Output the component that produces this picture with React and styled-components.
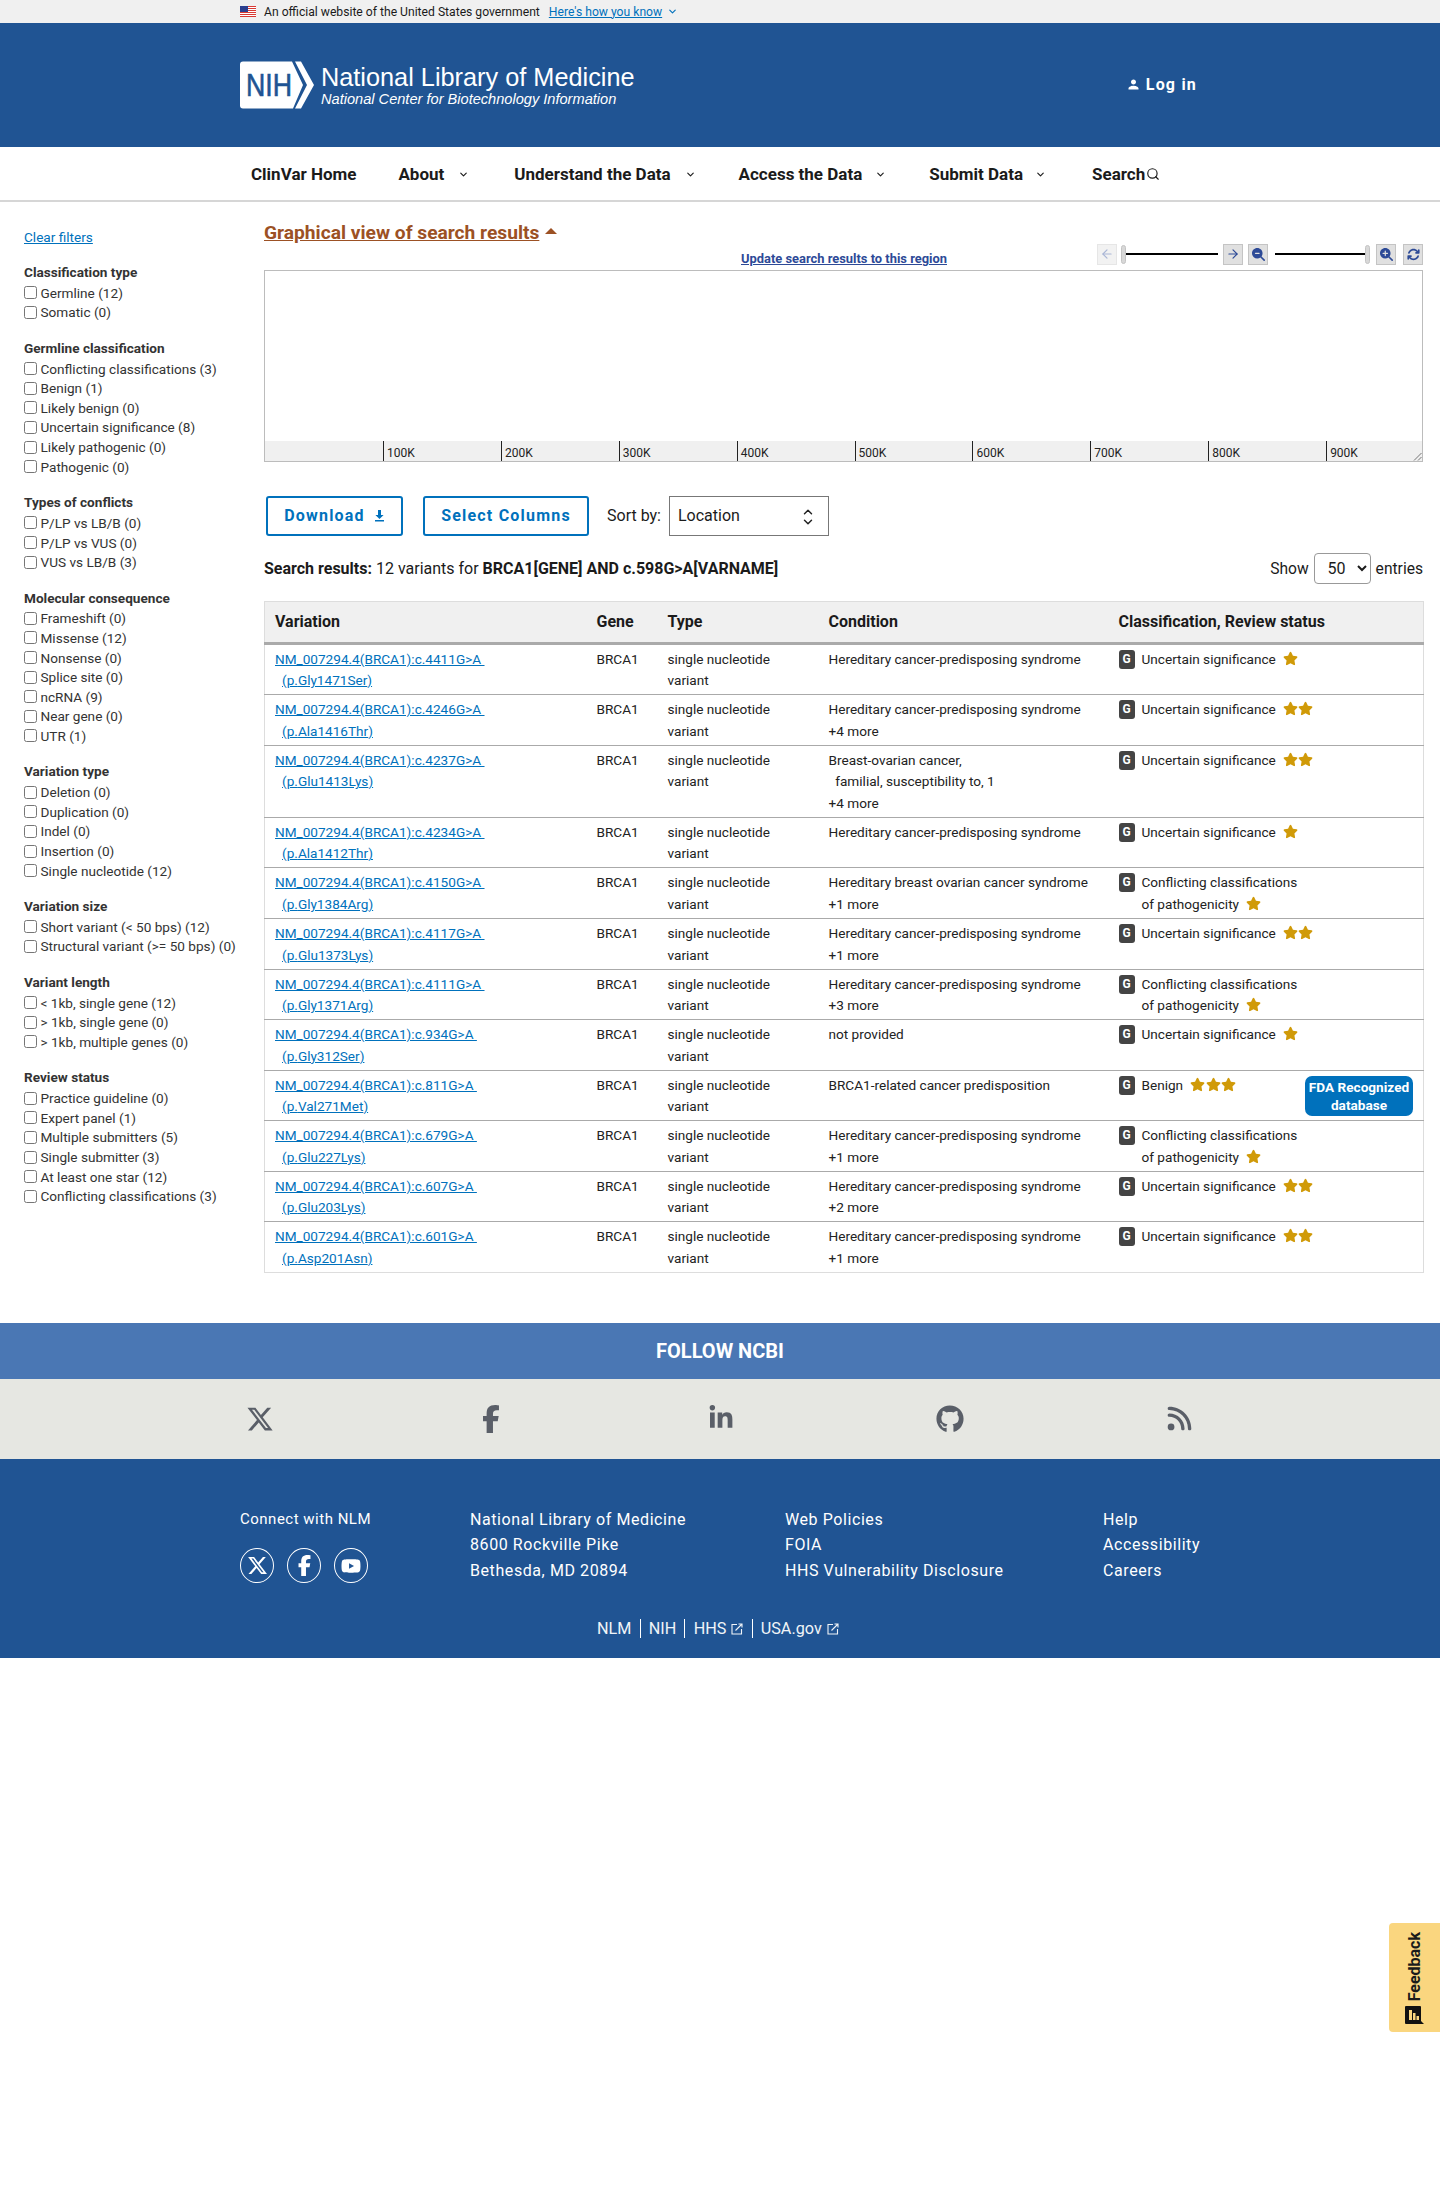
import React from "react";
import styled, { createGlobalStyle } from "styled-components";
import { ChevronDown, ChevronUp, ArrowLeft, ArrowRight, Search } from "lucide-react";
import { FaXTwitter, FaFacebookF, FaLinkedinIn, FaGithub, FaRss, FaYoutube, FaStar, FaMagnifyingGlassPlus, FaMagnifyingGlassMinus, FaArrowsRotate } from "react-icons/fa6";
import { MdPerson } from "react-icons/md";

const GlobalStyle = createGlobalStyle`
  html, body { margin: 0; padding: 0; background: #fff; }
  body { font-family: Roboto, "Liberation Sans", sans-serif; color: #1b1b1b; min-height: 2200px; }
  * { box-sizing: border-box; }
`;

const GovBanner = styled.div`
  height: 23px;
  background: #f0f0f0;
  display: flex;
  align-items: center;
  padding-left: 240px;
  font-size: 12.15px;
  color: #1b1b1b;
  svg.flag { margin-right: 8px; }
  a { color: #0071bc; margin-left: 9px; text-decoration: underline; }
  svg.chev { margin-left: 5px; color: #0071bc; }
`;

const Header = styled.header`
  height: 124px;
  background: #205493;
  display: flex;
  align-items: flex-start;
  padding: 38px 243px 0 240px;
  color: #fff;
`;

const LogoText = styled.div`
  margin-left: 7px;
  font-family: "Liberation Sans", Arial, sans-serif;
`;
const LogoTitle = styled.div`
  font-size: 25.3px;
  line-height: 30px;
  margin-top: 1px;
`;
const LogoSub = styled.div`
  font-size: 14.6px;
  font-style: italic;
  line-height: 15px;
`;

const LogIn = styled.a`
  margin-left: auto;
  margin-top: 14px;
  display: flex;
  align-items: center;
  gap: 5px;
  font-weight: 700;
  font-size: 16px;
  letter-spacing: 1.2px;
`;

const Nav = styled.nav`
  height: 55px;
  border-top: 1px solid #fff;
  border-bottom: 2px solid #d6d6d6;
  display: flex;
  align-items: center;
  padding-left: 251px;
`;

const NavItem = styled.a`
  display: flex;
  align-items: center;
  margin-right: ${(props) => props.$after || 0}px;
  font-weight: 700;
  font-size: 17px;
  color: #1b1b1b;
  svg { margin-left: ${(props) => props.$gap || 0}px; }
`;

const Page = styled.div`
  display: flex;
  align-items: flex-start;
`;

const Sidebar = styled.aside`
  width: 264px;
  flex-shrink: 0;
  padding: 27px 0 0 24px;
  font-size: 13.6px;
  color: #333;
`;

const ClearLink = styled.a`
  display: block;
  color: #0071bc;
  text-decoration: underline;
  line-height: 16px;
  margin-bottom: 17px;
`;

const FilterGroup = styled.div`
  margin-top: 15.7px;
`;

const FilterTitle = styled.div`
  font-weight: 700;
  line-height: 20px;
  margin-bottom: 1px;
`;

const FilterRow = styled.label`
  display: flex;
  align-items: center;
  height: 19.6px;
  input { width: 13px; height: 13px; margin: 0 3.5px 0 0; }
`;

const Main = styled.main`
  width: 1159px;
  padding-top: 19px;
`;

const ChartHeading = styled.a`
  display: inline-flex;
  align-items: center;
  gap: 6px;
  font-size: 19.2px;
  font-weight: 700;
  line-height: 24px;
  color: #9c5124;
  text-decoration: underline;
  i {
    display: block;
    width: 0;
    height: 0;
    border-left: 6px solid transparent;
    border-right: 6px solid transparent;
    border-bottom: 6px solid #9c5124;
    margin-bottom: 4px;
  }
`;

const ToolRow = styled.div`
  display: flex;
  align-items: flex-end;
  height: 26.5px;
  margin-top: -2px;
  padding-bottom: 5px;
`;

const UpdateLink = styled.a`
  margin-left: 477px;
  font-size: 12.9px;
  font-weight: 700;
  color: #2d4a97;
  text-decoration: underline;
  line-height: 14px;
  margin-bottom: -1px;
`;

const Tools = styled.div`
  margin-left: auto;
  display: flex;
  align-items: center;
  height: 21px;
`;

const ToolButton = styled.span`
  width: 20px;
  height: 21px;
  display: flex;
  align-items: center;
  justify-content: center;
  background: ${(props) => (props.$off ? "#f2f2f2" : "#e0e0e0")};
  border: 1px solid ${(props) => (props.$off ? "#e6e6e6" : "#c4c4c4")};
  color: ${(props) => (props.$off ? "#a9b6d6" : "#2d4a97")};
  margin-left: ${(props) => props.$ml || 0}px;
`;

const SliderTrack = styled.span`
  display: flex;
  align-items: center;
  width: ${(props) => props.$w}px;
  margin-left: ${(props) => props.$ml}px;
  height: 21px;
  flex-direction: ${(props) => (props.$end ? "row-reverse" : "row")};
  i {
    display: block;
    flex-shrink: 0;
    width: 5px;
    height: 19px;
    background: #d8d8d8;
    border: 1px solid #c4c4c4;
    border-radius: 3px;
  }
  b {
    display: block;
    flex: 1;
    height: 2px;
    background: #000;
  }
`;

const Chart = styled.div`
  position: relative;
  height: 192px;
  border: 1px solid #bcbcbc;
  display: flex;
  flex-direction: column;
  justify-content: flex-end;
`;

const Axis = styled.div`
  height: 20px;
  background: #f0f0f0;
  display: flex;
  padding-left: 118px;
`;

const Tick = styled.div`
  width: 117.9px;
  flex-shrink: 0;
  border-left: 1px solid #222;
  padding: 5px 0 0 3px;
  font-size: 12px;
  line-height: 15px;
  color: #222;
`;

const Grip = styled.svg`
  position: absolute;
  right: 0;
  bottom: 0;
`;

const Controls = styled.div`
  display: flex;
  align-items: center;
  margin: 34px 0 0 2px;
  height: 40px;
`;

const OutlineButton = styled.button`
  height: 40px;
  width: ${(props) => props.$w}px;
  margin-right: ${(props) => props.$mr}px;
  display: flex;
  align-items: center;
  justify-content: center;
  gap: 9px;
  background: #fff;
  border: 2px solid #0071bc;
  border-radius: 3px;
  color: #0071bc;
  font-family: Roboto, sans-serif;
  font-size: 16px;
  font-weight: 700;
  letter-spacing: 1.2px;
  padding: 0;
`;

const SortLabel = styled.span`
  font-size: 16px;
  margin-right: 8px;
`;

const SelectWrap = styled.div`
  position: relative;
  width: 160px;
  height: 40px;
  svg { position: absolute; right: 14px; color: #222; }
`;

const SortSelect = styled.select`
  appearance: none;
  width: 100%;
  height: 100%;
  border: 1px solid #777;
  border-radius: 0;
  background: #fff;
  padding-left: 8px;
  font-family: Roboto, sans-serif;
  font-size: 16px;
  color: #1b1b1b;
`;

const ResultsBar = styled.div`
  display: flex;
  align-items: center;
  justify-content: space-between;
  height: 32px;
  margin-top: 17px;
  font-size: 16px;
  color: #1b1b1b;
`;

const ShowBox = styled.div`
  display: flex;
  align-items: center;
  gap: 5px;
  font-size: 15.6px;
  select {
    width: 57px;
    height: 31px;
    border: 1px solid #999;
    border-radius: 4px;
    background: #fff;
    padding-left: 9px;
    font-family: Roboto, sans-serif;
    font-size: 16px;
    color: #1b1b1b;
  }
`;

const Table = styled.table`
  width: 1159px;
  margin-top: 16px;
  table-layout: fixed;
  border-collapse: collapse;
  font-size: 13.6px;
  color: #222;
  border: 1px solid #ddd;
  th {
    height: 42px;
    padding: 0 10px;
    background: #f0f0f0;
    border-bottom: 3px solid #aaa;
    text-align: left;
    font-size: 16px;
    font-weight: 700;
    color: #1b1b1b;
  }
  td {
    padding: 4px 10px 2.4px;
    line-height: 21.6px;
    vertical-align: top;
    border-bottom: 1px solid #aaa;
  }
  tr:last-child td { border-bottom: 1px solid #ddd; }
`;

const VarLink = styled.a`
  display: block;
  color: #0071bc;
  text-decoration: underline;
  white-space: pre;
  span { display: block; margin-left: 7px; }
`;

const TypeText = styled.span`
  display: block;
  max-width: 120px;
`;

const ConditionText = styled.div`
  white-space: pre;
`;

const StatusCell = styled.div`
  display: flex;
  align-items: flex-start;
`;

const GBadge = styled.span`
  flex-shrink: 0;
  width: 16px;
  height: 19px;
  margin: 1px 7px 0 0;
  background: #444;
  border-radius: 3px;
  color: #fff;
  font-size: 12px;
  font-weight: 700;
  line-height: 19px;
  text-align: center;
`;

const Stars = styled.span`
  display: inline-flex;
  gap: 0.4px;
  margin-left: 7px;
  vertical-align: -2px;
  color: #d09a08;
`;

const FdaBadge = styled.span`
  margin: 1px 0 0 auto;
  width: 108px;
  height: 40px;
  background: #0071bc;
  border-radius: 7px;
  color: #fff;
  font-size: 13.6px;
  font-weight: 700;
  line-height: 18px;
  text-align: center;
  padding-top: 2px;
`;

const FollowBar = styled.div`
  margin-top: 49.5px;
  height: 56px;
  background: #4a77b4;
  color: #fff;
  font-size: 20px;
  font-weight: 700;
  display: flex;
  align-items: center;
  justify-content: center;
`;

const SocialBar = styled.div`
  height: 80px;
  background: #e6e7e2;
  color: #5a5f68;
  display: flex;
  padding: 26px 0 0 246px;
  svg { display: block; }
`;

const SocialCell = styled.span`
  width: ${(props) => props.$w}px;
`;

const Footer = styled.footer`
  height: 199px;
  background: #205493;
  color: #fff;
  font-size: 16px;
  letter-spacing: 0.58px;
  padding: 48px 0 0 240px;
`;

const FooterCols = styled.div`
  display: flex;
  height: 112px;
`;

const FooterCol = styled.div`
  width: ${(props) => props.$w}px;
  line-height: 25.5px;
`;

const ConnectTitle = styled.div`
  font-size: 15px;
  letter-spacing: 0.5px;
`;

const Circles = styled.div`
  display: flex;
  gap: 13px;
  margin-top: 16px;
`;

const Circle = styled.span`
  width: 34px;
  height: 35px;
  border: 1px solid #fff;
  border-radius: 50%;
  display: flex;
  align-items: center;
  justify-content: center;
`;

const FooterLinks = styled.div`
  display: flex;
  align-items: center;
  margin-left: 357px;
  font-size: 16.2px;
  letter-spacing: 0;
  height: 20px;
  color: #f0f4f8;
  svg { margin-left: 5px; }
`;

const Sep = styled.span`
  width: 1px;
  height: 19px;
  background: #fff;
  margin: 0 8.2px;
`;

const Feedback = styled.a`
  position: fixed;
  top: 1923px;
  right: 0;
  width: 51px;
  height: 109px;
  background: #fad67f;
  border-radius: 4px 0 0 4px;
  display: flex;
  flex-direction: column;
  align-items: center;
  justify-content: flex-end;
  padding-bottom: 8px;
  color: #1b1b1b;
  span {
    writing-mode: vertical-rl;
    transform: rotate(180deg);
    font-size: 16px;
    font-weight: 700;
    line-height: 20px;
    margin-bottom: 5px;
  }
`;

const filters = [
  ["Classification type", ["Germline (12)", "Somatic (0)"]],
  ["Germline classification", ["Conflicting classifications (3)", "Benign (1)", "Likely benign (0)", "Uncertain significance (8)", "Likely pathogenic (0)", "Pathogenic (0)"]],
  ["Types of conflicts", ["P/LP vs LB/B (0)", "P/LP vs VUS (0)", "VUS vs LB/B (3)"]],
  ["Molecular consequence", ["Frameshift (0)", "Missense (12)", "Nonsense (0)", "Splice site (0)", "ncRNA (9)", "Near gene (0)", "UTR (1)"]],
  ["Variation type", ["Deletion (0)", "Duplication (0)", "Indel (0)", "Insertion (0)", "Single nucleotide (12)"]],
  ["Variation size", ["Short variant (< 50 bps) (12)", "Structural variant (>= 50 bps) (0)"]],
  ["Variant length", ["< 1kb, single gene (12)", "> 1kb, single gene (0)", "> 1kb, multiple genes (0)"]],
  ["Review status", ["Practice guideline (0)", "Expert panel (1)", "Multiple submitters (5)", "Single submitter (3)", "At least one star (12)", "Conflicting classifications (3)"]],
];

const HCPS = "Hereditary cancer-predisposing syndrome";
const US = "Uncertain significance";
const CONF = "Conflicting classifications";

const rows = [
  ["4411", "Gly1471Ser", [HCPS], US, 1],
  ["4246", "Ala1416Thr", [HCPS, "+4 more"], US, 2],
  ["4237", "Glu1413Lys", ["Breast-ovarian cancer,", "  familial, susceptibility to, 1", "+4 more"], US, 2],
  ["4234", "Ala1412Thr", [HCPS], US, 1],
  ["4150", "Gly1384Arg", ["Hereditary breast ovarian cancer syndrome", "+1 more"], CONF, 1],
  ["4117", "Glu1373Lys", [HCPS, "+1 more"], US, 2],
  ["4111", "Gly1371Arg", [HCPS, "+3 more"], CONF, 1],
  ["934", "Gly312Ser", ["not provided"], US, 1],
  ["811", "Val271Met", ["BRCA1-related cancer predisposition"], "Benign", 3],
  ["679", "Glu227Lys", [HCPS, "+1 more"], CONF, 1],
  ["607", "Glu203Lys", [HCPS, "+2 more"], US, 2],
  ["601", "Asp201Asn", [HCPS, "+1 more"], US, 2],
];

const ExternalIcon = () => (
  <svg width="12" height="12" viewBox="0 0 12 12" fill="none" stroke="currentColor" strokeWidth="1.1">
    <path d="M6 1.500H1v9.500h9.500V6" />
    <path d="M4.500 7.500 10.500 1.500M7.500 1h3.500v3.500" />
  </svg>
);

const StarRow = ({ count }) => (
  <Stars>
    {Array.from({ length: count }).map((_, i) => (
      <FaStar key={i} size={15} />
    ))}
  </Stars>
);

const App = () => {
  return (
    <>
      <GlobalStyle />
      <GovBanner>
        <svg className="flag" width="16" height="11" viewBox="0 0 16 11">
          <rect width="16" height="11" fill="#fff" />
          <path d="M0 .5h16M0 2.500h16M0 4.500h16M0 6.500h16M0 8.500h16M0 10.500h16" stroke="#d83933" />
          <rect width="8" height="6" fill="#2b3f8f" />
        </svg>
        An official website of the United States government
        <a>Here's how you know</a>
        <ChevronDown className="chev" size={11} strokeWidth={2.5} />
      </GovBanner>
      <Header>
        <svg width="74" height="48" viewBox="0 0 74 48">
          <path d="M3 0.5H52L63 24 53 47.5H3a3 3 0 0 1-3-3V3.500a3 3 0 0 1 3-3z" fill="#fff" />
          <path d="M55 .5h6L74 24 61 47.5h-6L67 24z" fill="#fff" />
          <text x="6" y="35" fontFamily="Liberation Sans" fontSize="31" fontWeight="400" fill="#205493" stroke="#205493" strokeWidth="0.6" textLength="46" lengthAdjust="spacingAndGlyphs">NIH</text>
        </svg>
        <LogoText>
          <LogoTitle>National Library of Medicine</LogoTitle>
          <LogoSub>National Center for Biotechnology Information</LogoSub>
        </LogoText>
        <LogIn>
          <MdPerson size={15} />
          Log in
        </LogIn>
      </Header>
      <Nav>
        <NavItem $after={42}>ClinVar Home</NavItem>
        <NavItem $gap={14} $after={45}>About <ChevronDown size={11} strokeWidth={2.5} /></NavItem>
        <NavItem $gap={14} $after={43}>Understand the Data <ChevronDown size={11} strokeWidth={2.5} /></NavItem>
        <NavItem $gap={13} $after={43}>Access the Data <ChevronDown size={11} strokeWidth={2.5} /></NavItem>
        <NavItem $gap={12} $after={46}>Submit Data <ChevronDown size={11} strokeWidth={2.5} /></NavItem>
        <NavItem $gap={1}>Search<Search size={14} strokeWidth={2} /></NavItem>
      </Nav>
      <Page>
        <Sidebar>
          <ClearLink>Clear filters</ClearLink>
          {filters.map(([title, items]) => (
            <FilterGroup key={title}>
              <FilterTitle>{title}</FilterTitle>
              {items.map((item) => (
                <FilterRow key={item}>
                  <input type="checkbox" />
                  {item}
                </FilterRow>
              ))}
            </FilterGroup>
          ))}
        </Sidebar>
        <Main>
          <ChartHeading>Graphical view of search results <i /></ChartHeading>
          <ToolRow>
            <UpdateLink>Update search results to this region</UpdateLink>
            <Tools>
              <ToolButton $off><ArrowLeft size={14} /></ToolButton>
              <SliderTrack $w={97} $ml={4}><i /><b /></SliderTrack>
              <ToolButton $ml={5}><ArrowRight size={14} /></ToolButton>
              <ToolButton $ml={5}><FaMagnifyingGlassMinus size={13} /></ToolButton>
              <SliderTrack $w={95} $ml={7} $end><i /><b /></SliderTrack>
              <ToolButton $ml={6}><FaMagnifyingGlassPlus size={13} /></ToolButton>
              <ToolButton $ml={7}><FaArrowsRotate size={13} /></ToolButton>
            </Tools>
          </ToolRow>
          <Chart>
            <Axis>
              {[100, 200, 300, 400, 500, 600, 700, 800, 900].map((k) => (
                <Tick key={k}>{k}K</Tick>
              ))}
            </Axis>
            <Grip width="9" height="9" viewBox="0 0 9 9" stroke="#777">
              <path d="M1 8.500 8.500 1M5 8.500 8.500 5" />
            </Grip>
          </Chart>
          <Controls>
            <OutlineButton $w={137} $mr={20}>
              Download
              <svg width="11" height="12" viewBox="0 0 11 12" fill="#0071bc">
                <path d="M4 0h3v5h2.600L5.500 9 1.400 5H4z" />
                <rect x="1" y="10" width="9" height="1.500" />
              </svg>
            </OutlineButton>
            <OutlineButton $w={166} $mr={18}>Select Columns</OutlineButton>
            <SortLabel>Sort by:</SortLabel>
            <SelectWrap>
              <SortSelect defaultValue="Location">
                <option>Location</option>
              </SortSelect>
              <ChevronUp size={14} strokeWidth={2.5} style={{ top: 9 }} />
              <ChevronDown size={14} strokeWidth={2.5} style={{ top: 19 }} />
            </SelectWrap>
          </Controls>
          <ResultsBar>
            <span>
              <b>Search results:</b> 12 variants for <b>BRCA1[GENE] AND c.598G&gt;A[VARNAME]</b>
            </span>
            <ShowBox>
              Show
              <select defaultValue="50">
                <option>50</option>
              </select>
              entries
            </ShowBox>
          </ResultsBar>
          <Table>
            <colgroup>
              <col style={{ width: 322 }} />
              <col style={{ width: 71 }} />
              <col style={{ width: 161 }} />
              <col style={{ width: 290 }} />
              <col style={{ width: 315 }} />
            </colgroup>
            <thead>
              <tr>
                <th>Variation</th>
                <th>Gene</th>
                <th>Type</th>
                <th>Condition</th>
                <th>Classification, Review status</th>
              </tr>
            </thead>
            <tbody>
              {rows.map(([pos, prot, cond, status, stars]) => (
                <tr key={pos}>
                  <td>
                    <VarLink>
                      {`NM_007294.4(BRCA1):c.${pos}G>A `}
                      <span>(p.{prot})</span>
                    </VarLink>
                  </td>
                  <td>BRCA1</td>
                  <td><TypeText>single nucleotide variant</TypeText></td>
                  <td><ConditionText>{cond.join("\n")}</ConditionText></td>
                  <td>
                    <StatusCell>
                      <GBadge>G</GBadge>
                      {status === CONF ? (
                        <span>
                          {CONF}
                          <br />
                          of pathogenicity
                          <StarRow count={stars} />
                        </span>
                      ) : (
                        <span>
                          {status}
                          <StarRow count={stars} />
                        </span>
                      )}
                      {status === "Benign" && (
                        <FdaBadge>FDA Recognized database</FdaBadge>
                      )}
                    </StatusCell>
                  </td>
                </tr>
              ))}
            </tbody>
          </Table>
        </Main>
      </Page>
      <FollowBar>FOLLOW NCBI</FollowBar>
      <SocialBar>
        <SocialCell $w={231}><FaXTwitter size={28} /></SocialCell>
        <SocialCell $w={231}><FaFacebookF size={28} /></SocialCell>
        <SocialCell $w={228}><FaLinkedinIn size={26} /></SocialCell>
        <SocialCell $w={230}><FaGithub size={28} /></SocialCell>
        <SocialCell $w={30}><FaRss size={27} /></SocialCell>
      </SocialBar>
      <Footer>
        <FooterCols>
          <FooterCol $w={230}>
            <ConnectTitle>Connect with NLM</ConnectTitle>
            <Circles>
              <Circle><FaXTwitter size={21} /></Circle>
              <Circle><FaFacebookF size={21} /></Circle>
              <Circle><FaYoutube size={20} /></Circle>
            </Circles>
          </FooterCol>
          <FooterCol $w={315}>
            <div>National Library of Medicine</div>
            <div>8600 Rockville Pike</div>
            <div>Bethesda, MD 20894</div>
          </FooterCol>
          <FooterCol $w={318}>
            <div>Web Policies</div>
            <div>FOIA</div>
            <div>HHS Vulnerability Disclosure</div>
          </FooterCol>
          <FooterCol $w={120}>
            <div>Help</div>
            <div>Accessibility</div>
            <div>Careers</div>
          </FooterCol>
        </FooterCols>
        <FooterLinks>
          NLM<Sep />NIH<Sep />HHS<ExternalIcon /><Sep />USA.gov<ExternalIcon />
        </FooterLinks>
      </Footer>
      <Feedback>
        <span>Feedback</span>
        <svg width="19" height="18" viewBox="0 0 19 18">
          <path d="M0 1a1 1 0 0 1 1-1h14a1 1 0 0 1 1 1v14l3 3H1a1 1 0 0 1-1-1z" fill="#111" />
          <path d="M4 4h3v10H4zM8 7h2.500v7H8zM11.500 10H14v4h-2.500z" fill="#fad67f" />
        </svg>
      </Feedback>
    </>
  );
};

export default App;
